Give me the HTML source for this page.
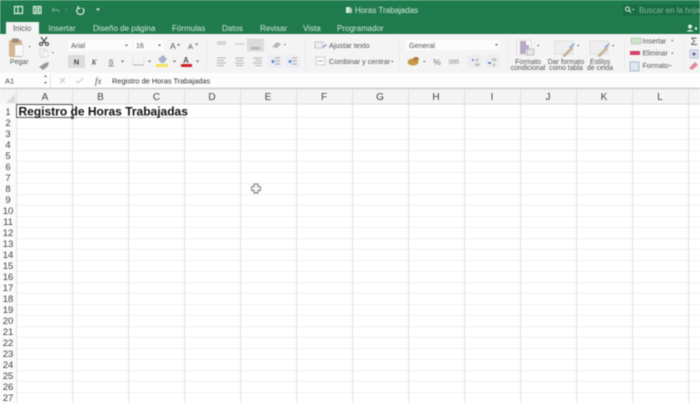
<!DOCTYPE html>
<html lang="es"><head><meta charset="utf-8"><title>Horas Trabajadas</title>
<style>
html,body{margin:0;padding:0;width:700px;height:403px;overflow:hidden;background:#fff}
svg{display:block;filter:blur(.55px)}
text{font-family:"Liberation Sans",sans-serif}
.t{font-size:8px;fill:#d3e8dc}
.g{font-size:6.900px;fill:#555}
.r{font-size:9.500px;fill:#444;text-anchor:middle}
.c{font-size:10px;fill:#444;text-anchor:middle}
.m{text-anchor:middle}
</style></head><body>
<svg width="700" height="403" viewBox="0 0 700 403" xmlns="http://www.w3.org/2000/svg">
<defs><linearGradient id="gr" x1="0" y1="0" x2="0" y2="1"><stop offset="0" stop-color="#1f7c4e"/><stop offset="1" stop-color="#207a4c"/></linearGradient></defs>
<rect width="700" height="403" fill="#fff"/>
<rect width="700" height="34" fill="url(#gr)"/>
<!-- title bar icons -->
<g fill="none" stroke="#dcebe3" stroke-width="1.200">
<rect x="14.500" y="6.500" width="8" height="7"/><path d="M18 6.500v7"/>
<rect x="33.500" y="6.500" width="7.500" height="7"/><path d="M35.500 6.500v2.500h3.500v-2.500M35.500 13.500v-2.500h3.500v2.500"/>
<path d="M52 10h5q2 0 2 2M52 10l2-2M52 10l2 2" stroke="#6fa98c"/>
<path d="M82.500 8a3.600 3.600 0 1 1-4.500 .2M78 6v2.500h2.500"/>
</g>
<path d="M96 8.500h4l-2 2.500z" fill="#dcebe3"/><path d="M65 9h2l-1 1.500z" fill="#6fa98c"/>
<rect x="346" y="7" width="4" height="6" fill="#dcebe3"/><rect x="349" y="8" width="3" height="5" fill="#a8cdb9"/>
<text x="355" y="13" style="font-size:8px;fill:#d5e8de">Horas Trabajadas</text>
<rect x="623" y="4.500" width="77" height="11" fill="#1a6d44"/>
<circle cx="627.500" cy="9" r="2" fill="none" stroke="#dcebe3"/><path d="M629 10.500l2 2" stroke="#dcebe3"/>
<path d="M632 9h2.500l-1.250 1.500z" fill="#dcebe3"/>
<text x="639" y="13" style="font-size:7.900px;fill:#86b7a0">Buscar en la hoja</text>
<!-- tabs -->
<rect x="6" y="22" width="33" height="12" fill="#f4f4f4"/>
<text x="13" y="31" style="font-size:7.800px;fill:#555">Inicio</text>
<text x="48.500" y="31" class="t">Insertar</text>
<text x="93" y="31" class="t">Diseño de página</text>
<text x="172" y="31" class="t">Fórmulas</text>
<text x="222" y="31" class="t">Datos</text>
<text x="260" y="31" class="t">Revisar</text>
<text x="303" y="31" class="t">Vista</text>
<text x="337" y="31" class="t">Programador</text>
<path d="M690 28.500a2 2 0 1 1 .1 0M686.500 31.500q3.500-3.500 7 0z" fill="#e3f1e9"/><path d="M696 27v3M694.500 28.500h3" stroke="#e3f1e9"/>
<!-- ribbon -->
<rect y="34" width="700" height="39" fill="#f4f4f4"/>
<!-- paste -->
<rect x="9" y="40" width="13" height="17" rx="1" fill="#d4b591"/><rect x="12" y="38.500" width="7" height="4" fill="#9a8a7a"/><rect x="15" y="45" width="8" height="11" fill="#fafafa" stroke="#ccc" stroke-width=".5"/>
<text x="10" y="64" class="g">Pegar</text>
<path d="M28.500 46h2l-1 1.500z" fill="#555"/>
<path d="M41 37l5 7M47 37l-5 7" stroke="#444" stroke-width="1.100" fill="none"/><circle cx="41" cy="44" r="1.500" fill="none" stroke="#444"/><circle cx="47" cy="44" r="1.500" fill="none" stroke="#444"/>
<rect x="40" y="49" width="6" height="8" fill="#f8f8f8" stroke="#ccc" stroke-width=".7"/><rect x="43" y="51" width="5" height="6" fill="#f8f8f8" stroke="#d4d4d4" stroke-width=".7"/>
<path d="M52 52h2l-1 1.500z" fill="#666"/>
<path d="M39 67l6-4 4-1-1 4-5 4z" fill="#999"/>
<!-- font -->
<rect x="68" y="40" width="64" height="11" fill="#fbfbfb"/>
<text x="71" y="48" class="g" style="font-size:7px">Arial</text><path d="M125 44.500h3l-1.500 2z" fill="#666"/>
<rect x="134" y="40" width="30" height="11" fill="#fbfbfb"/>
<text x="136" y="48" class="g" style="font-size:7px">16</text><path d="M158 44.500h3l-1.500 2z" fill="#666"/>
<text x="170" y="49" style="font-size:8.500px;fill:#555">A</text><path d="M177 45.500h3l-1.500-2z" fill="#666"/>
<text x="188" y="49" style="font-size:7.500px;fill:#555">A</text><path d="M195 43.500h3l-1.500 2z" fill="#666"/>
<rect x="68" y="55" width="17" height="13" fill="#dcdcdc"/>
<text x="76.500" y="64.500" class="m" style="font-size:7.500px;font-weight:bold;fill:#444">N</text>
<text x="94" y="64.500" class="m" style="font-size:7.500px;font-style:italic;font-weight:bold;fill:#555;font-family:'Liberation Serif',serif">K</text>
<text x="111" y="64.500" class="m" style="font-size:7.500px;fill:#555;text-decoration:underline">S</text>
<path d="M121 60.500h3l-1.500 2z" fill="#666"/>
<path d="M133 65h11" stroke="#999" stroke-width="1" stroke-dasharray="1.500 .5"/><path d="M133 58v7M144 58v7" stroke="#ddd"/>
<path d="M148 60.500h3l-1.500 2z" fill="#666"/>
<path d="M163 55l4 4-3 4h-3l-3-4z" fill="#a4b4ca"/><rect x="156" y="64" width="12" height="3" fill="#f3e357"/>
<path d="M173 60.500h3l-1.500 2z" fill="#666"/>
<text x="186" y="63" class="m" style="font-size:8px;fill:#555;font-weight:bold">A</text><rect x="181" y="64" width="11" height="3" fill="#d0202a"/>
<path d="M196 60.500h3l-1.500 2z" fill="#666"/>
<!-- separator -->
<path d="M206.500 38v31M305.500 38v31M399.500 38v31M507.500 38v31M624.500 38v31M683.500 38v31" stroke="#e9e9e9"/>
<!-- alignment -->
<path d="M217 42h9M217 44h9" stroke="#c6c6c6" stroke-width="1.200"/>
<path d="M235 44h9M235 46h0" stroke="#c6c6c6" stroke-width="1.200"/>
<rect x="247" y="38.500" width="17" height="13" fill="#dcdcdc"/>
<path d="M251 47.500h9M251 49h9" stroke="#aaa" stroke-width="1"/>
<path d="M272 47l5-5 4 2-4 4z" fill="#b5b5b5"/><path d="M284 44h2l-1 1.500z" fill="#666"/>
<path d="M217 58h9M217 60.500h7M217 63h9M217 65.500h7M235 58h9M236 60.500h7M235 63h9M236 65.500h7M253 58h9M255 60.500h7M253 63h9M255 65.500h7" stroke="#b4b4b4" stroke-width=".9"/>
<rect x="268" y="55" width="15" height="13" fill="#ededf3"/><rect x="285" y="55" width="15" height="13" fill="#ededf3"/>
<path d="M271 61.500l3-2v4z" fill="#3f78c8"/><path d="M275 58h5M275 61h5M275 64h5" stroke="#aaa"/>
<path d="M288 61.500l3-2v4z" fill="#3f78c8"/><path d="M292 58h5M292 61h5M292 64h5" stroke="#aaa"/>
<!-- wrap -->
<rect x="315" y="42" width="8" height="6" fill="#eee" stroke="#aaa" stroke-width=".6"/><path d="M323 47q3-1 3-3" stroke="#5e86c5" fill="none"/>
<text x="329" y="48" class="g" style="font-size:7.300px">Ajustar texto</text>
<rect x="316" y="57" width="9" height="8" fill="#f9f9f9" stroke="#bbb" stroke-width=".6"/><path d="M318 61h5" stroke="#777" stroke-width=".6"/>
<text x="329" y="64" class="g" style="font-size:7.200px">Combinar y centrar</text><path d="M391 61h2.500l-1.250 1.500z" fill="#666"/>
<!-- number -->
<rect x="406" y="40" width="94" height="10" fill="#fcfcfc"/>
<text x="409" y="48" class="g" style="font-size:7.300px">General</text><path d="M495 44h3l-1.500 2z" fill="#666"/>
<ellipse cx="413" cy="62" rx="5.500" ry="3.500" fill="#c99a45"/><ellipse cx="416" cy="59" rx="3" ry="2" fill="#b0803a"/>
<path d="M423 61h2.500l-1.250 1.500z" fill="#666"/>
<text x="437" y="65" class="m" style="font-size:8.500px;fill:#777">%</text>
<text x="454" y="64" class="m" style="font-size:6px;fill:#777">000</text>
<rect x="467" y="55" width="15" height="13" fill="#eee"/><rect x="485" y="55" width="15" height="13" fill="#eee"/>
<path d="M472 60h2" stroke="#3f78c8" stroke-width="1.500"/><text x="475" y="61" style="font-size:4px;fill:#666">,0</text><text x="475" y="66" style="font-size:4px;fill:#666">00</text>
<path d="M488 63h3" stroke="#3f78c8" stroke-width="1.500"/><text x="492" y="61" style="font-size:4px;fill:#666">00</text><text x="492" y="66" style="font-size:4px;fill:#666">,0</text>
<!-- styles -->
<rect x="517" y="40" width="14" height="15" fill="#fafafa" stroke="#ccc" stroke-width=".5"/><path d="M523 41h3v4h3v4h-3v5h-6v-13z" fill="#b5a9c7"/><rect x="527" y="49" width="7" height="6" fill="#e5e5e5" stroke="#999" stroke-width=".5"/>
<path d="M537 45h2.500l-1.250 1.500z" fill="#666"/>
<text x="528" y="64" class="g m">Formato</text><text x="528" y="70" class="g m">condicional</text>
<rect x="555" y="41" width="18" height="13" fill="#eee" stroke="#ccc" stroke-width=".5"/><path d="M562 56l9-9 2 2-8 8z" fill="#c7b496"/><path d="M569 47l5-4 1 1-4 5z" fill="#9ab1cf"/>
<path d="M577 45h2.500l-1.250 1.500z" fill="#666"/>
<text x="566" y="64" class="g m">Dar formato</text><text x="566" y="70" class="g m">como tabla</text>
<rect x="590" y="41" width="18" height="13" fill="#eee" stroke="#ccc" stroke-width=".5"/><path d="M597 56l9-9 2 2-8 8z" fill="#c7b496"/><path d="M604 47l5-4 1 1-4 5z" fill="#9ab1cf"/>
<path d="M612 45h2.500l-1.250 1.500z" fill="#666"/>
<text x="600" y="64" class="g m">Estilos</text><text x="600" y="70" class="g m">de celda</text>
<!-- cells -->
<rect x="631" y="38" width="10" height="6" fill="#cfe3c5" stroke="#9bb" stroke-width=".5"/><text x="642.500" y="43.500" class="g" style="font-size:7px">Insertar</text><path d="M671 40h2.500l-1.250 1.500z" fill="#666"/>
<rect x="630" y="51" width="10" height="4" fill="#d0406a"/><text x="642.500" y="55.500" class="g" style="font-size:7px">Eliminar</text><path d="M671 52.500h2.500l-1.250 1.500z" fill="#666"/>
<rect x="630" y="62" width="9" height="9" fill="#dfe6f2" stroke="#8899b5" stroke-width=".6"/><text x="642.500" y="68" class="g" style="font-size:7px">Formato</text><path d="M669 65h2.500l-1.250 1.500z" fill="#666"/>
<text x="694" y="45" class="m" style="font-size:11px;fill:#555">Σ</text>
<rect x="690" y="50" width="8" height="8" fill="#dfe6f2" stroke="#9aa8c0" stroke-width=".6"/><path d="M692 54h4M694 52v4" stroke="#447"/>
<path d="M689 68l6-6 3 3-6 5z" fill="#e08a9c"/>
<!-- formula bar -->
<rect y="73" width="700" height="15" fill="#fdfdfd"/>
<rect y="87.500" width="700" height="2" fill="#d6d6d6"/>
<text x="5" y="83.500" style="font-size:7.500px;fill:#444">A1</text>
<path d="M44 77l1.500-2 1.500 2zM44 82l1.500 2 1.500-2z" fill="#666"/>
<path d="M50.500 74v14" stroke="#e4e4e4"/>
<path d="M60 78l5 5M65 78l-5 5" stroke="#c8c8c8"/>
<path d="M76 81l2 2 5-5" stroke="#c8c8c8" fill="none"/>
<text x="95" y="84" style="font-size:9px;font-style:italic;fill:#555;font-family:'Liberation Serif',serif">fx</text>
<text x="112" y="83.500" style="font-size:7.400px;fill:#333">Registro de Horas Trabajadas</text>
<!-- header row -->
<rect y="89.500" width="700" height="14.500" fill="#f4f4f4"/>
<path d="M6 103l9-9v9z" fill="#dcdcdc"/>
<rect x="0" y="104" width="16" height="299" fill="#fbfbfb"/>
<rect x="16" y="103.500" width="684" height="1" fill="#dcdcdc"/>
<g>
<text x="45" y="100" class="c">A</text><text x="100.500" y="100" class="c">B</text><text x="156.500" y="100" class="c">C</text><text x="212" y="100" class="c">D</text><text x="268" y="100" class="c">E</text><text x="324" y="100" class="c">F</text><text x="380" y="100" class="c">G</text><text x="436" y="100" class="c">H</text><text x="492" y="100" class="c">I</text><text x="548" y="100" class="c">J</text><text x="604" y="100" class="c">K</text><text x="660" y="100" class="c">L</text>
</g>
<!-- grid -->
<path stroke="#efefef" stroke-width="1" d="M16 117.500H700M16 128.500H700M16 139.500H700M16 150.500H700M16 161.500H700M16 172.500H700M16 183.500H700M16 194.500H700M16 205.500H700M16 216.500H700M16 227.500H700M16 238.500H700M16 249.500H700M16 260.500H700M16 271.500H700M16 282.500H700M16 293.500H700M16 304.500H700M16 315.500H700M16 326.500H700M16 337.500H700M16 348.500H700M16 359.500H700M16 370.500H700M16 381.500H700M16 392.500H700"/>
<path stroke="#e2e2e2" stroke-width="1" d="M16.500 90V403M72.500 90V403M128.500 90V403M184.500 90V403M240.500 90V403M296.500 90V403M352.500 90V403M408.500 90V403M464.500 90V403M520.500 90V403M576.500 90V403M632.500 90V403M688.500 90V403"/>
<rect x="72" y="105" width="113" height="12" fill="#fff"/>
<path d="M72.500 117.500H185" stroke="#c4c4c4"/>
<!-- row numbers -->
<text x="8" y="115" class="r">1</text><text x="8" y="126" class="r">2</text><text x="8" y="137" class="r">3</text><text x="8" y="148" class="r">4</text><text x="8" y="159" class="r">5</text><text x="8" y="170" class="r">6</text><text x="8" y="181" class="r">7</text><text x="8" y="192" class="r">8</text><text x="8" y="203" class="r">9</text><text x="8" y="214" class="r">10</text><text x="8" y="225" class="r">11</text><text x="8" y="236" class="r">12</text><text x="8" y="247" class="r">13</text><text x="8" y="258" class="r">14</text><text x="8" y="269" class="r">15</text><text x="8" y="280" class="r">16</text><text x="8" y="291" class="r">17</text><text x="8" y="302" class="r">18</text><text x="8" y="313" class="r">19</text><text x="8" y="324" class="r">20</text><text x="8" y="335" class="r">21</text><text x="8" y="346" class="r">22</text><text x="8" y="357" class="r">23</text><text x="8" y="368" class="r">24</text><text x="8" y="379" class="r">25</text><text x="8" y="390" class="r">26</text><text x="8" y="401" class="r">27</text>
<!-- A1 selection -->
<rect x="16.500" y="104.500" width="56" height="13" fill="none" stroke="#555" stroke-width="1"/>
<rect x="71" y="116" width="3" height="3" fill="#555"/>
<text x="18.500" y="115.500" style="font-size:12px;font-weight:bold;fill:#111">Registro de Horas Trabajadas</text>
<!-- cursor -->
<path d="M254 184h4v2.500h2.500v4H258v2.500h-4v-2.500h-2.500v-4H254z" fill="#f2f2f2" stroke="#777" stroke-width=".9"/>
</svg>
</body></html>
